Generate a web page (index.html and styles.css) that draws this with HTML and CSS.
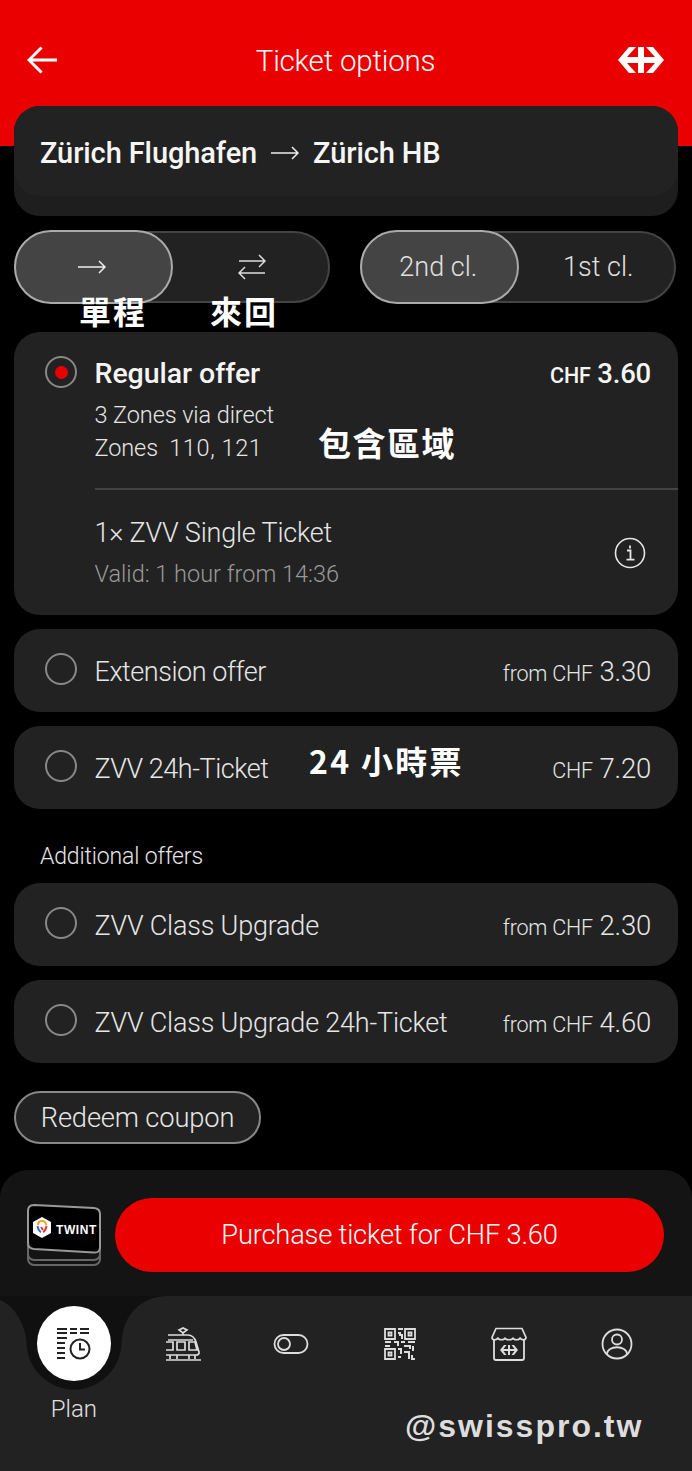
FILE: index.html
```html
<!DOCTYPE html>
<html lang="en">
<head>
<meta charset="utf-8">
<title>Ticket options</title>
<link rel="stylesheet" href="styles.css">
</head>
<body>
<div class="page">
  <header class="top">
    <svg class="back" viewBox="0 0 32 30" width="31" height="30"><path d="M15 2 2 15l13 13M2 15h29" fill="none" stroke="#fff" stroke-width="3"/></svg>
    <h1 class="title">Ticket options</h1>
    <svg class="logo" viewBox="0 0 46 26" width="46" height="26"><polygon fill="#fff" points="0,13 11,0 18,0 9,10 20,10 20,0 26,0 26,10 37,10 28,0 35,0 46,13 35,26 28,26 37,16 26,16 26,26 20,26 20,16 9,16 18,26 11,26"/></svg>
  </header>
  <main class="content">
    <section class="route">
      <div class="route-in">
        <span>Zürich Flughafen</span>
        <svg class="route-arrow" viewBox="0 0 28 14" width="28" height="14"><path d="M0 7h27M21 1l6 6-6 6" fill="none" stroke="#eee" stroke-width="1.5"/></svg>
        <span>Zürich HB</span>
      </div>
    </section>
    <div class="toggles">
      <div class="seg">
        <div class="seg-opt seg-on"><svg viewBox="0 0 28 14" width="28" height="14"><path d="M0 7h27M21 1l6 6-6 6" fill="none" stroke="#eee" stroke-width="1.5"/></svg></div>
        <div class="seg-opt"><svg viewBox="0 0 28 28" width="28" height="28"><path d="M1 8h26M21 2l6 6-6 6M27 20H1M7 14l-6 6 6 6" fill="none" stroke="#ddd" stroke-width="1.5"/></svg></div>
        <span class="note note-one">單程</span>
        <span class="note note-two">來回</span>
      </div>
      <div class="seg">
        <div class="seg-opt seg-on">2nd cl.</div>
        <div class="seg-opt">1st cl.</div>
      </div>
    </div>
    <section class="card card-main">
      <div class="main-head">
        <span class="radio radio-on"></span>
        <div class="main-body">
          <div class="line-top"><strong class="offer-strong">Regular offer</strong><span class="price strong"><small>CHF</small> 3.60</span></div>
          <div class="sub">3 Zones via direct</div>
          <div class="sub">Zones&nbsp; <span class="nums">110, 121</span></div>
        </div>
      </div>
      <span class="note note-zone">包含區域</span>
      <div class="main-foot">
        <div class="foot-text">
          <div class="offer">1× ZVV Single Ticket</div>
          <div class="valid">Valid: 1 hour from 14:36</div>
        </div>
        <svg class="info" viewBox="0 0 32 32" width="32" height="32"><circle cx="16" cy="16" r="14.5" fill="none" stroke="#e6e6e6" stroke-width="1.6"/><path d="M13 13.5h3.5v9M12.5 22.7h8M16 8.500v3" fill="none" stroke="#e6e6e6" stroke-width="1.8"/></svg>
      </div>
    </section>
    <section class="card row"><span class="radio"></span><span class="offer offer-tight">Extension offer</span><span class="price"><small>from CHF</small> 3.30</span></section>
    <section class="card row"><span class="radio"></span><span class="offer offer-tight">ZVV 24h-Ticket</span><span class="price"><small>CHF</small> 7.20</span><span class="note note-day">24 小時票</span></section>
    <h2 class="group">Additional offers</h2>
    <section class="card row"><span class="radio"></span><span class="offer">ZVV Class Upgrade</span><span class="price"><small>from CHF</small> 2.30</span></section>
    <section class="card row"><span class="radio"></span><span class="offer">ZVV Class Upgrade 24h-Ticket</span><span class="price"><small>from CHF</small> 4.60</span></section>
    <div class="coupon">Redeem coupon</div>
  </main>
  <section class="buy">
    <svg class="twint" viewBox="0 0 76 64" width="76" height="64">
      <rect x="2" y="18" width="72" height="44" rx="6" fill="none" stroke="#666" stroke-width="2"/>
      <rect x="2" y="13" width="72" height="44" rx="6" fill="#141414" stroke="#666" stroke-width="2"/>
      <path d="M8 2 68 5q6 .5 6 6v33q0 6-6 5.500L8 46q-6-.5-6-6V8q0-6 6-6z" fill="#000" stroke="#999" stroke-width="2"/>
      <path d="M16 14l9 5v11l-9 5-9-5V19z" fill="#fff"/>
      <path d="M12 22q0-4 4-4t4 4" fill="none" stroke="#f5a623" stroke-width="2"/>
      <path d="M11.500 23q1 5 3.500 6" fill="none" stroke="#2a6fdb" stroke-width="2"/>
      <path d="M20.500 23q-1 5-3.500 6M15 24l2 3" fill="none" stroke="#e8322c" stroke-width="2"/>
      <text x="30" y="31" class="twint-word">TWINT</text>
    </svg>
    <div class="buy-btn">Purchase ticket for CHF 3.60</div>
  </section>
  <nav class="tabs">
    <svg class="notch" viewBox="0 0 180 100" width="180" height="100"><path d="M0 0H168C140 0 123 20 121.500 46A47.500 47.500 0 0 1 26.500 46C25 26 12 8 0 4Z" fill="#101010"/></svg>
    <div class="tab tab-on">
      <div class="tab-circle">
        <svg viewBox="0 0 36 36" width="36" height="36"><path d="M1 3h10M14 3h7M24 3h9M1 7h10M14 7h7M24 7h9M1 12h10M1 17h8M1 22h8M1 27h8M1 32h8" fill="none" stroke="#222" stroke-width="2"/><circle cx="24" cy="23" r="9.500" fill="#fff" stroke="#222" stroke-width="2"/><path d="M24 17v6.500h5" fill="none" stroke="#222" stroke-width="2"/></svg>
      </div>
      <span class="tab-label">Plan</span>
    </div>
    <div class="tab"><div class="tab-icon">
      <svg viewBox="0 0 36 34" width="36" height="34"><path d="M14 3l4-2 4 2-4 3zM18 6v2M3 8h20c5 0 7 4 8 7l3 10c.5 2-1 3-3 3H1M3 13h25M1 15h7v8H1M12 15h8v8h-8zM24 15h6l2 8h-8zM1 33h35M5 28v4M12 28v4M24 28v4M30 28v4" fill="none" stroke="#ddd" stroke-width="1.700"/></svg>
    </div></div>
    <div class="tab"><div class="tab-icon">
      <svg viewBox="0 0 36 22" width="36" height="22"><rect x="1.500" y="2" width="33" height="18" rx="9" fill="none" stroke="#ddd" stroke-width="1.800"/><circle cx="11" cy="11" r="6" fill="none" stroke="#ddd" stroke-width="1.800"/></svg>
    </div></div>
    <div class="tab"><div class="tab-icon">
      <svg viewBox="0 0 32 32" width="32" height="32"><path d="M1 1h10v10H1zM21 1h10v10H21zM1 21h10v10H1zM4.500 4.500h3v3h-3zM24.500 4.500h3v3h-3zM4.500 24.500h3v3h-3z" fill="none" stroke="#ddd" stroke-width="1.800"/><path d="M14 1h5M14 5h2v3M18 6v5M1 14h6M10 14h4v4M17 14h4M24 14h7M1 18h5M20 18h6v3M29 18v5M14 21h3v5M20 24h5v7M14 29h3M28 27v4h3" fill="none" stroke="#ddd" stroke-width="2"/></svg>
    </div></div>
    <div class="tab"><div class="tab-icon">
      <svg viewBox="0 0 36 34" width="36" height="34"><path d="M5 1.500h26l4 9c0 3-5 3-6 0 0 3-7 3-7 0 0 3-8 3-8 0 0 3-7 3-7 0-1 3-6 3-6 0z" fill="none" stroke="#ddd" stroke-width="1.700"/><path d="M3 13v18q0 2 2 2h26q2 0 2-2V13" fill="none" stroke="#ddd" stroke-width="1.800"/><polygon fill="#ddd" points="9,23 13,18 15.500,18 12.500,22 17,22 17,18 19,18 19,22 23.500,22 20.500,18 23,18 27,23 23,28 20.500,28 23.500,24 19,24 19,28 17,28 17,24 12.500,24 15.500,28 13,28"/></svg>
    </div></div>
    <div class="tab"><div class="tab-icon">
      <svg viewBox="0 0 32 32" width="32" height="32"><circle cx="16" cy="16" r="14.500" fill="none" stroke="#ddd" stroke-width="1.800"/><circle cx="16" cy="11.500" r="5" fill="none" stroke="#ddd" stroke-width="1.800"/><path d="M6 26c0-9 20-9 20 0" fill="none" stroke="#ddd" stroke-width="1.800"/></svg>
    </div></div>
    <span class="mark">@swisspro.tw</span>
  </nav>
</div>
</body>
</html>
```

FILE: styles.css
```css
* { box-sizing: border-box; }
html, body { margin: 0; padding: 0; background: #000; }
body { font-family: "Roboto", "Liberation Sans", "Noto Sans CJK TC", sans-serif; font-weight: 300; color: #e6e6e6; }
.page { width: 692px; height: 1471px; overflow: hidden; display: flex; flex-direction: column; background: #000; }
.top { height: 146px; flex: none; background: #eb0000; display: grid; grid-template-columns: 1fr auto 1fr; align-items: start; padding: 45px 28px 0 27px; }
.title { margin: 0; font-size: 29.500px; line-height: 32px; font-weight: 300; color: #fff; letter-spacing: -.2px; }
.logo { margin-top: 2px; justify-self: end; }
.content { display: flex; flex-direction: column; padding: 0 14px; margin-top: -40px; }
.route { height: 110px; background: #1e1e1e; border-radius: 26px; }
.route-in { height: 90px; background: #222; border-radius: 26px; display: flex; align-items: center; gap: 14px; padding: 4px 26px 0; font-size: 29px; font-weight: 500; color: #f5f5f5; letter-spacing: -.1px; }
.toggles { display: flex; gap: 30px; margin-top: 15px; }
.seg { position: relative; width: 316px; height: 72px; display: flex; background: #222; border: 2px solid #444; border-radius: 36px; font-size: 27px; color: #e0e0e0; }
.seg-opt { flex: 1; display: flex; align-items: center; justify-content: center; padding-left: 4px; }
.seg-on { flex: none; width: 158.500px; height: 74px; margin: -3px 0 0 -2px; padding: 0 2px 0 0; background: #444; border: 2px solid #aaa; border-radius: 37px; }
.note { position: absolute; font-family: "Noto Sans CJK TC", sans-serif; font-weight: 700; color: #fff; white-space: nowrap; }
.note-one { left: 63px; top: 57px; font-size: 32px; line-height: 40px; letter-spacing: 2px; }
.note-two { left: 194px; top: 57px; font-size: 32px; line-height: 40px; letter-spacing: 2px; }
.note-zone { left: 304px; top: 88px; font-size: 33px; line-height: 44px; letter-spacing: 1.500px; }
.note-day { left: 295px; top: 12px; font-size: 32px; line-height: 44px; letter-spacing: 2.300px; }
.card { position: relative; background: #222; border-radius: 26px; }
.card-main { margin-top: 29px; height: 283px; }
.main-head { display: flex; padding: 24px 27px 0 31px; height: 156px; }
.radio { flex: none; width: 32px; height: 32px; border: 2px solid #888; border-radius: 50%; display: flex; align-items: center; justify-content: center; }
.row .radio { margin-top: -6px; }
.radio-on::after { content: ""; width: 13px; height: 13px; border-radius: 50%; background: #eb0000; }
.main-body { flex: 1; margin-left: 17.500px; }
.line-top { display: flex; justify-content: space-between; align-items: center; height: 34px; margin-bottom: 9px; }
.offer-strong { font-size: 28.500px; font-weight: 500; color: #f5f5f5; letter-spacing: -.05px; }
.price { font-size: 27.500px; letter-spacing: -.2px; white-space: nowrap; margin-left: auto; }
.price small { font-size: 21.500px; }
.price.strong { font-weight: 500; color: #f5f5f5; }
.sub { font-size: 23.500px; line-height: 33px; letter-spacing: -.1px; }
.nums { letter-spacing: .6px; }
.main-foot { margin-left: 80.500px; border-top: 2px solid #444; padding: 27px 32px 0 0; display: flex; justify-content: space-between; align-items: center; }
.offer { font-size: 27px; letter-spacing: -.2px; }
.offer-tight { letter-spacing: -.45px; }
.valid { font-size: 23.500px; color: #999; margin-top: 11px; }
.row { height: 83px; margin-top: 14px; display: flex; align-items: center; padding: 2px 27px 0 31px; gap: 17.500px; }
.group { margin: 0; height: 74px; padding: 33px 26px 0; font-size: 23px; line-height: 30px; font-weight: 300; letter-spacing: -.15px; }
.group + .row { margin-top: 0; }
.coupon { align-self: flex-start; margin-top: 28px; width: 247px; height: 53px; display: flex; align-items: center; justify-content: center; background: #222; border: 2px solid #888; border-radius: 27px; font-size: 27.300px; letter-spacing: -.15px; }
.buy { margin-top: 26px; height: 126px; flex: none; background: #141414; border-radius: 28px 28px 0 0; display: flex; align-items: flex-start; padding: 28px 28px 0 26px; gap: 13px; }
.twint { margin-top: 5px; }
.twint-word { font-family: "Liberation Sans", sans-serif; font-size: 12px; font-weight: 700; fill: #fff; letter-spacing: .6px; }
.buy-btn { flex: 1; height: 74px; background: #eb0000; border-radius: 37px; display: flex; align-items: center; justify-content: center; color: #fff; font-size: 27.300px; letter-spacing: -.2px; }
.tabs { position: relative; flex: 1; background: #222; display: grid; grid-template-columns: repeat(6, 108.700px); align-content: start; padding: 10px 0 0 19.500px; }
.notch { position: absolute; left: 0; top: 0; }
.tab { position: relative; display: flex; flex-direction: column; align-items: center; }
.tab-circle { width: 74px; height: 75px; background: #fff; border-radius: 50%; display: flex; align-items: center; justify-content: center; }
.tab-icon { height: 75px; display: flex; align-items: center; justify-content: center; }
.tab-label { margin-top: 13px; font-size: 24px; line-height: 30px; color: #e0e0e0; }
.mark { position: absolute; left: 405px; top: 108px; font-family: "Liberation Sans", sans-serif; font-weight: 700; font-size: 32px; line-height: 44px; letter-spacing: 2px; color: #ddd; white-space: nowrap; }
```
